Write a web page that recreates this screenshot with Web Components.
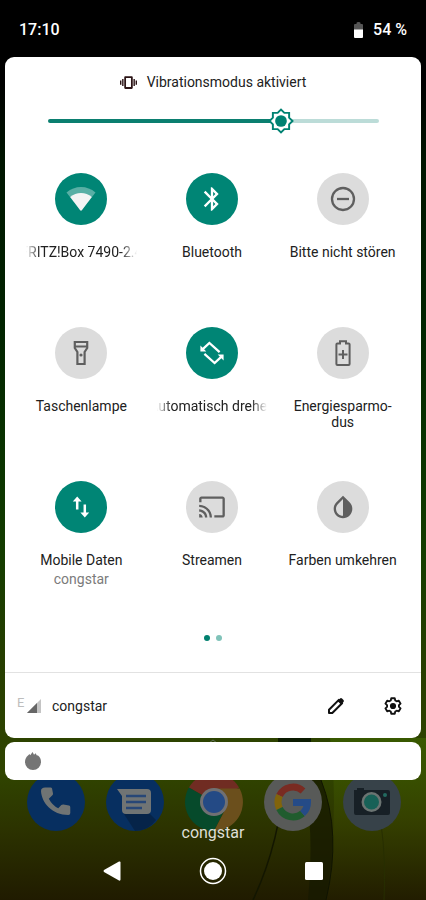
<!DOCTYPE html>
<html lang="de">
<head>
<meta charset="utf-8">
<meta name="viewport" content="width=device-width, initial-scale=1">
<title>Schnelleinstellungen</title>
<style>
  body { margin: 0; background: #1b1a00; font-family: Roboto, "Noto Sans", sans-serif; }
</style>
</head>
<body>
<phone-screen>
  <status-bar></status-bar>
  <quick-panel>
    <ringer-note slot="head">Vibrationsmodus aktiviert</ringer-note>
    <brightness-slider slot="head"></brightness-slider>
    <quick-tile on fade icon="wifi">FRITZ!Box 7490-2.4</quick-tile>
    <quick-tile on icon="bluetooth">Bluetooth</quick-tile>
    <quick-tile icon="dnd">Bitte nicht stören</quick-tile>
    <quick-tile icon="torch">Taschenlampe</quick-tile>
    <quick-tile on fade icon="rotate">Automatisch drehen</quick-tile>
    <quick-tile icon="battery">Energiesparmo&shy;dus</quick-tile>
    <quick-tile on icon="data">Mobile Daten<span slot="detail">congstar</span></quick-tile>
    <quick-tile icon="cast">Streamen</quick-tile>
    <quick-tile icon="invert">Farben umkehren</quick-tile>
    <panel-footer slot="foot">congstar</panel-footer>
  </quick-panel>
  <notification-strip></notification-strip>
  <app-dock></app-dock>
  <carrier-label>congstar</carrier-label>
  <nav-bar></nav-bar>
</phone-screen>

<script>
const define = (name, html, setup) => customElements.define(name, class extends HTMLElement {
  constructor() {
    super();
    const t = document.createElement('template');
    t.innerHTML = html;
    this.attachShadow({ mode: 'open' }).append(t.content.cloneNode(true));
  }
  connectedCallback() { if (setup) setup(this, this.shadowRoot); }
});

/* Icons are drawn around the centre of a 28-unit box. */
const m = d => `<g transform="translate(-14 -14) scale(1.1667)"><path fill="currentColor" d="${d}"/></g>`;
const icons = {
  wifi: `<path fill="#fff" opacity=".35" d="M-14.5-6.5Q-8-12 0-12T14.5-6.5L0 12z"/><path fill="#f4f4f4" d="M-10.8-2Q-6-6 0-6T10.8-2L1 11Q0 12-1 11z"/>`,
  bluetooth: m('M17.71 7.71L12 2h-1v7.59L6.41 5 5 6.41 10.59 12 5 17.59 6.41 19 11 14.41V22h1l5.71-5.71-4.3-4.29 4.3-4.29zM13 5.83l1.88 1.88L13 9.59V5.83zm1.88 10.46L13 18.17v-3.76l1.88 1.88z'),
  dnd: `<g fill="none" stroke="currentColor" stroke-width="2.3"><circle r="11"/><path d="M-6 0H6"/></g>`,
  torch: `<g fill="none" stroke="currentColor" stroke-width="2.2"><path d="M-6.2-11H6.2V-5L3.6-1V11H-3.6V-1L-6.2-5zM-6.2-6.5H6.2"/></g><circle cy="2" r="1.6" fill="currentColor"/>`,
  rotate: `<g fill="none" stroke="currentColor" stroke-width="2.3"><path d="M-9.5-3.6L-2.6-10 7.6-.9M9.5 3.600L2.600 10-7.600.9"/></g><path fill="currentColor" d="M-11.600-7.400V-1.500H-5.700zM11.600 7.400V1.500H5.700z"/>`,
  battery: `<g fill="none" stroke="currentColor" stroke-width="2"><path d="M-3-11.8H3V-9.4H5.6Q6.6-9.4 6.6-8.4V11Q6.6 12 5.6 12H-5.6Q-6.6 12-6.6 11V-8.4Q-6.6-9.4-5.6-9.4H-3zM-4.5 1.5H4.5M0-3V6"/></g>`,
  data: `<g fill="none" stroke="currentColor" stroke-width="2.5"><path d="M-3.8 2.4V-7M3.8-2.4V7"/></g><path fill="currentColor" d="M-8.2-5.6L-3.8-10.4.6-5.6zM8.2 5.6L3.8 10.4-.6 5.6z"/>`,
  cast: m('M21 3H3c-1.1 0-2 .9-2 2v3h2V5h18v14h-7v2h7c1.1 0 2-.9 2-2V5c0-1.1-.9-2-2-2zM1 18v3h3c0-1.66-1.34-3-3-3zm0-4v2c2.76 0 5 2.24 5 5h2c0-3.87-3.13-7-7-7zm0-4v2c4.97 0 9 4.03 9 9h2c0-6.08-4.93-11-11-11z'),
  invert: m('M17.66 7.93L12 2.27 6.34 7.93c-3.12 3.12-3.12 8.19 0 11.31C7.9 20.8 9.95 21.58 12 21.58s4.1-.78 5.66-2.34c3.12-3.12 3.12-8.19 0-11.31zM12 19.59c-1.6 0-3.11-.62-4.24-1.76C6.62 16.69 6 15.19 6 13.59s.62-3.11 1.76-4.24L12 5.1v14.49z')
};

define('phone-screen', `
<style>
  :host { display: block; position: relative; min-height: 100vh; overflow: hidden;
    background: linear-gradient(#000 0, #000 9%, #001600 18%, #012400 36%, #0b3500 52%, #153d00 62%, #263e00 73%, #304400 86%, #2c3300 92%, #201b00 100%); }
  .wall { position: absolute; left: 0; bottom: 0; width: 100%; height: 162px; }
  .flow { position: relative; display: flex; flex-direction: column; min-height: 100vh; }
</style>
<svg class="wall" viewBox="0 0 426 162" preserveAspectRatio="none" aria-hidden="true">
  <defs><linearGradient id="g" x2="0" y2="1"><stop offset="0" stop-color="#3f6500"/><stop offset=".5" stop-color="#394600" /><stop offset="1" stop-color="#231e00"/></linearGradient></defs>
  <path d="M330 0H426V162H325Q340 80 330 0z" fill="url(#g)" opacity=".65"/>
  <path d="M278 0h33v4h-33z" fill="#0c1b00"/>
  <path d="M308 162Q315 90 303 42H321Q342 95 326 162z" fill="#171a00" opacity=".75"/>
  <path d="M285 34Q280 105 253 162" fill="none" stroke="#131600" stroke-width="1.5"/>
  <path d="M321 42Q342 95 326 162" fill="none" stroke="#101400"/>
  <path d="M381 86Q386 120 384 162" fill="none" stroke="#272e00"/>
  <path d="M209 5l4-3 4 3" fill="none" stroke="#60705a"/>
</svg>
<div class="flow"><slot></slot></div>`);

define('status-bar', `
<style>
  :host { display: flex; align-items: center; justify-content: space-between; height: 57px; padding: 2px 19px 0; box-sizing: border-box; color: #fff; font-size: 16px; font-weight: 500; line-height: 20px; }
  span { display: flex; align-items: center; gap: 10px; }
</style>
<time>17:10</time>
<span><svg width="9" height="16" viewBox="0 0 9 16" aria-hidden="true"><path fill="#555" d="M0 3Q0 2 1 2H2.5V1Q2.5 0 4.5 0T6.5 1V2H8Q9 2 9 3V8H0z"/><path fill="#fff" d="M0 7.5H9V15Q9 16 8 16H1Q0 16 0 15z"/></svg>54 %</span>`);

define('quick-panel', `
<style>
  :host { display: block; margin: 0 5px; background: #fff; border-radius: 9px; color: #212121; }
  .grid { display: grid; grid-template-columns: repeat(3, minmax(0, 1fr)); grid-auto-rows: 154px; padding: 39px 13px 0 11px; }
  .dots { display: flex; justify-content: center; gap: 6px; padding: 0 0 31px; }
  i { width: 6px; height: 6px; border-radius: 50%; background: #00806f; }
  i + i { background: #80c3b9; }
</style>
<slot name="head"></slot>
<div class="grid"><slot></slot></div>
<div class="dots"><i></i><i></i></div>
<slot name="foot"></slot>`);

define('ringer-note', `
<style>
  :host { display: flex; justify-content: center; align-items: center; gap: 10px; padding-top: 15px; font-size: 14px; line-height: 20px; }
</style>
<svg width="17" height="17" viewBox="0 0 24 24" fill="#2b1416" aria-hidden="true"><path d="M0 15h2V9H0v6zm3 2h2V7H3v10zm19-8v6h2V9h-2zm-3 8h2V7h-2v10zM16.5 3h-9C6.67 3 6 3.67 6 4.5v15c0 .83.67 1.5 1.5 1.5h9c.83 0 1.5-.67 1.5-1.5v-15c0-.83-.67-1.5-1.5-1.5zM15.500 18.500H8.500V5.500h7z"/></svg>
<span><slot></slot></span>`);

define('brightness-slider', `
<style>
  :host { display: block; padding: 16px 42px 0 43px; }
  input { -webkit-appearance: none; appearance: none; display: block; width: 100%; height: 26px; margin: 0; background: none; }
  input::-webkit-slider-runnable-track { height: 4px; border-radius: 2px; background: linear-gradient(90deg, #0b7f70 70%, #bcdcd8 70%); }
  input::-webkit-slider-thumb { -webkit-appearance: none; width: 26px; height: 26px; margin-top: -11px; border: 0;
    background: url("data:image/svg+xml,%3Csvg xmlns='http://www.w3.org/2000/svg' viewBox='0 0 24 24'%3E%3Cpath d='M19.500 15.100L22.600 12 19.500 8.900V4.500h-4.400L12 1.400 8.900 4.500H4.500v4.400L1.400 12l3.100 3.100v4.400h4.400L12 22.600l3.100-3.100h4.400z' fill='white' stroke='%23008272' stroke-width='1.800'/%3E%3Ccircle cx='12' cy='12' r='5.400' fill='%23008272'/%3E%3C/svg%3E") center / contain no-repeat; }
</style>
<input type="range" min="0" max="255" value="184" aria-label="Helligkeit">`);

define('quick-tile', `
<style>
  :host { display: block; }
  button { display: flex; flex-direction: column; align-items: center; width: 100%; padding: 0 10px; border: 0; background: none; font: inherit; font-size: 14px; line-height: 16px; color: #212121; }
  .disc { display: grid; place-items: center; width: 52px; height: 52px; margin-bottom: 19px; border-radius: 50%; background: #dcdcdc; color: #5f5f5f; }
  :host([on]) .disc { background: #008575; color: #fff; }
  .label { width: 100%; text-align: center; }
  :host([fade]) .label { display: flex; justify-content: center; white-space: nowrap; overflow: hidden;
    -webkit-mask-image: linear-gradient(90deg, transparent, #000 14px, #000 calc(100% - 16px), transparent); }
  ::slotted([slot=detail]) { margin-top: 3px; color: #7b7b7b; }
</style>
<button type="button">
  <span class="disc"></span>
  <span class="label"><slot></slot></span>
  <slot name="detail"></slot>
</button>`, (host, root) => {
  root.querySelector('.disc').innerHTML = `<svg width="30" height="30" viewBox="-15 -15 30 30" aria-hidden="true">${icons[host.getAttribute('icon')]}</svg>`;
  root.querySelector('button').setAttribute('aria-pressed', host.hasAttribute('on'));
});

define('panel-footer', `
<style>
  :host { display: flex; align-items: center; height: 65px; padding: 0 10px 0 12px; border-top: 1px solid #e2e2e2; font-size: 14px; line-height: 20px; }
  .net { font-size: 13px; line-height: 12px; color: #bdbdbd; margin-bottom: 6px; width: 10px; }
  .name { margin-left: 11px; flex: 1; }
  button { display: grid; place-items: center; width: 36px; height: 36px; padding: 0; border: 0; background: none; color: #111; }
  button + button { margin-left: 21px; }
</style>
<span class="net">E</span>
<svg width="14" height="14" viewBox="0 0 14 14" aria-hidden="true"><path d="M14 0V14H0z" fill="#c4c4c4"/><path d="M10 4V14H0z" fill="#666"/></svg>
<span class="name"><slot></slot></span>
<button type="button" aria-label="Bearbeiten"><svg width="18" height="18" viewBox="0 0 18 18"><path d="M2 16V12.700L11.800 2.900 15.100 6.200 5.300 16z" fill="none" stroke="currentColor" stroke-width="2" stroke-linejoin="round"/><path d="M10.500 4L13 1.500Q14 .6 15 1.500L16.500 3Q17.400 4 16.500 5L14 7.500z" fill="currentColor"/></svg></button>
<button type="button" aria-label="Einstellungen"><svg width="20" height="20" viewBox="0 0 24 24"><path d="M9.900 3.200h4.200l.6 2.700 1.700 1 2.600-.8 2.100 3.600-2 1.800v2l2 1.800-2.100 3.600-2.600-.8-1.700 1-.6 2.700H9.900l-.6-2.700-1.700-1-2.600.8-2.100-3.600 2-1.800v-2l-2-1.800L5 6.100l2.600.8 1.700-1z" transform="translate(0 -.5)" fill="none" stroke="currentColor" stroke-width="2.200" stroke-linejoin="round"/><circle cx="12" cy="12" r="3.700" fill="currentColor"/></svg></button>`);

define('notification-strip', `
<style>
  :host { display: flex; align-items: center; height: 38px; margin: 4px 5px 0; padding: 0 20px; background: #fff; border-radius: 9px; position: relative; z-index: 1; box-sizing: border-box; }
</style>
<svg width="16" height="18" viewBox="0 0 16 18" aria-hidden="true"><path fill="#757575" d="M3 3.500L4.500 2 5.200 3.200 7.600 0 9 2.800 10.800 1.300 11.600 3.200 13 3.600Q16 6 16 10A8 8 0 0 1 0 10Q0 6 3 3.500z"/></svg>`);

define('app-dock', `
<style>
  :host { display: grid; grid-template-columns: repeat(5, 1fr); justify-items: center; margin-top: -7px; padding: 0 15px 0 17px; }
  a { display: block; width: 58px; height: 58px; }
  svg { display: block; }
</style>
<a href="#telefon" aria-label="Telefon"><svg width="58" height="58" viewBox="0 0 58 58"><circle cx="29" cy="29" r="29" fill="#072f60"/><path transform="translate(10 10) scale(1.6)" fill="#707474" d="M5.100 2.800H8.500Q9.200 2.800 9.400 3.500L10 6.500Q10.100 7.200 9.600 7.700L7.400 9.800Q9.500 13.900 13.300 15.800L15.200 13.800Q15.800 13.300 16.500 13.400L20 14.100Q20.800 14.300 20.800 15.100V18.800Q20.800 20 19.600 20C9.500 20 3 12.500 2.500 5.200 2.400 3.500 3.500 2.800 5.100 2.800z"/></svg></a>
<a href="#nachrichten" aria-label="Nachrichten"><svg width="58" height="58" viewBox="0 0 58 58"><circle cx="29" cy="29" r="29" fill="#072f60"/><path fill="#062449" d="M16 38L43 40 50 47Q42 58 29 58Z"/><path fill="#707474" d="M11 16H41Q45 16 45 20V37Q45 41 41 41H20Q16 41 16 37V23z"/><path d="M20 23H40M20 29H40M20 35H36" stroke="#274777" stroke-width="2.500"/></svg></a>
<a href="#chrome" aria-label="Chrome"><svg width="58" height="58" viewBox="0 0 58 58"><path fill="#702c22" d="M29 29L3.900 14.500A29 29 0 0 1 54.100 14.500z"/><path fill="#064a2b" d="M29 29L3.900 14.500A29 29 0 0 0 29 58L40 36z"/><path fill="#6b4f1c" d="M29 15.500H54.600A29 29 0 0 1 29 58L41 35z"/><circle cx="29" cy="29" r="14" fill="#707073"/><circle cx="29" cy="29" r="11" fill="#244a85"/></svg></a>
<a href="#google" aria-label="Google"><svg width="58" height="58" viewBox="0 0 58 58"><circle cx="29" cy="29" r="29" fill="#585a58"/><g fill="none" stroke-width="7"><path stroke="#792b22" d="M39 18A15 15 0 0 0 15.500 22.500"/><path stroke="#82640b" d="M15.500 22.500A15 15 0 0 0 15.500 35.500"/><path stroke="#205c2e" d="M15.500 35.500A15 15 0 0 0 38.500 40.500"/><path stroke="#254b87" d="M38.500 40.500Q43.500 36 43.500 29.500H29"/></g></svg></a>
<a href="#kamera" aria-label="Kamera"><svg width="58" height="58" viewBox="0 0 58 58"><circle cx="29" cy="29" r="29" fill="#374249"/><path fill="#172026" d="M11 17H14V15H21V17H45Q47 17 47 19V40Q47 42 45 42H13Q11 42 11 40z"/><circle cx="28.500" cy="29" r="10" fill="#6b7472"/><circle cx="28.500" cy="29" r="7.500" fill="#176157"/><circle cx="42" cy="22" r="2" fill="#236a60"/></svg></a>`);

define('carrier-label', `
<style>
  :host { display: block; margin-top: -8px; text-align: center; font-size: 16px; line-height: 20px; color: #dedfd6; position: relative; }
</style><slot></slot>`);

define('nav-bar', `
<style>
  :host { display: flex; justify-content: center; gap: 61px; padding-top: 8px; }
  button { display: grid; place-items: center; width: 40px; height: 40px; padding: 0; border: 0; background: none; }
</style>
<button type="button" aria-label="Zurück"><svg width="18" height="20" viewBox="0 0 18 20"><path fill="#fff" d="M1 9L16 .5Q17.500 0 17.500 1.500V18.500Q17.500 20 16 19.500L1 11Q0 10 1 9z"/></svg></button>
<button type="button" aria-label="Startbildschirm"><svg width="28" height="28" viewBox="-14 -14 28 28"><circle r="12.500" fill="none" stroke="#fff" stroke-width="1.500"/><circle r="9" fill="#fff"/></svg></button>
<button type="button" aria-label="Übersicht"><svg width="18" height="20" viewBox="0 0 18 20"><rect y="1" width="18" height="18" rx="1.500" fill="#fff"/></svg></button>`);
</script>
</body>
</html>
